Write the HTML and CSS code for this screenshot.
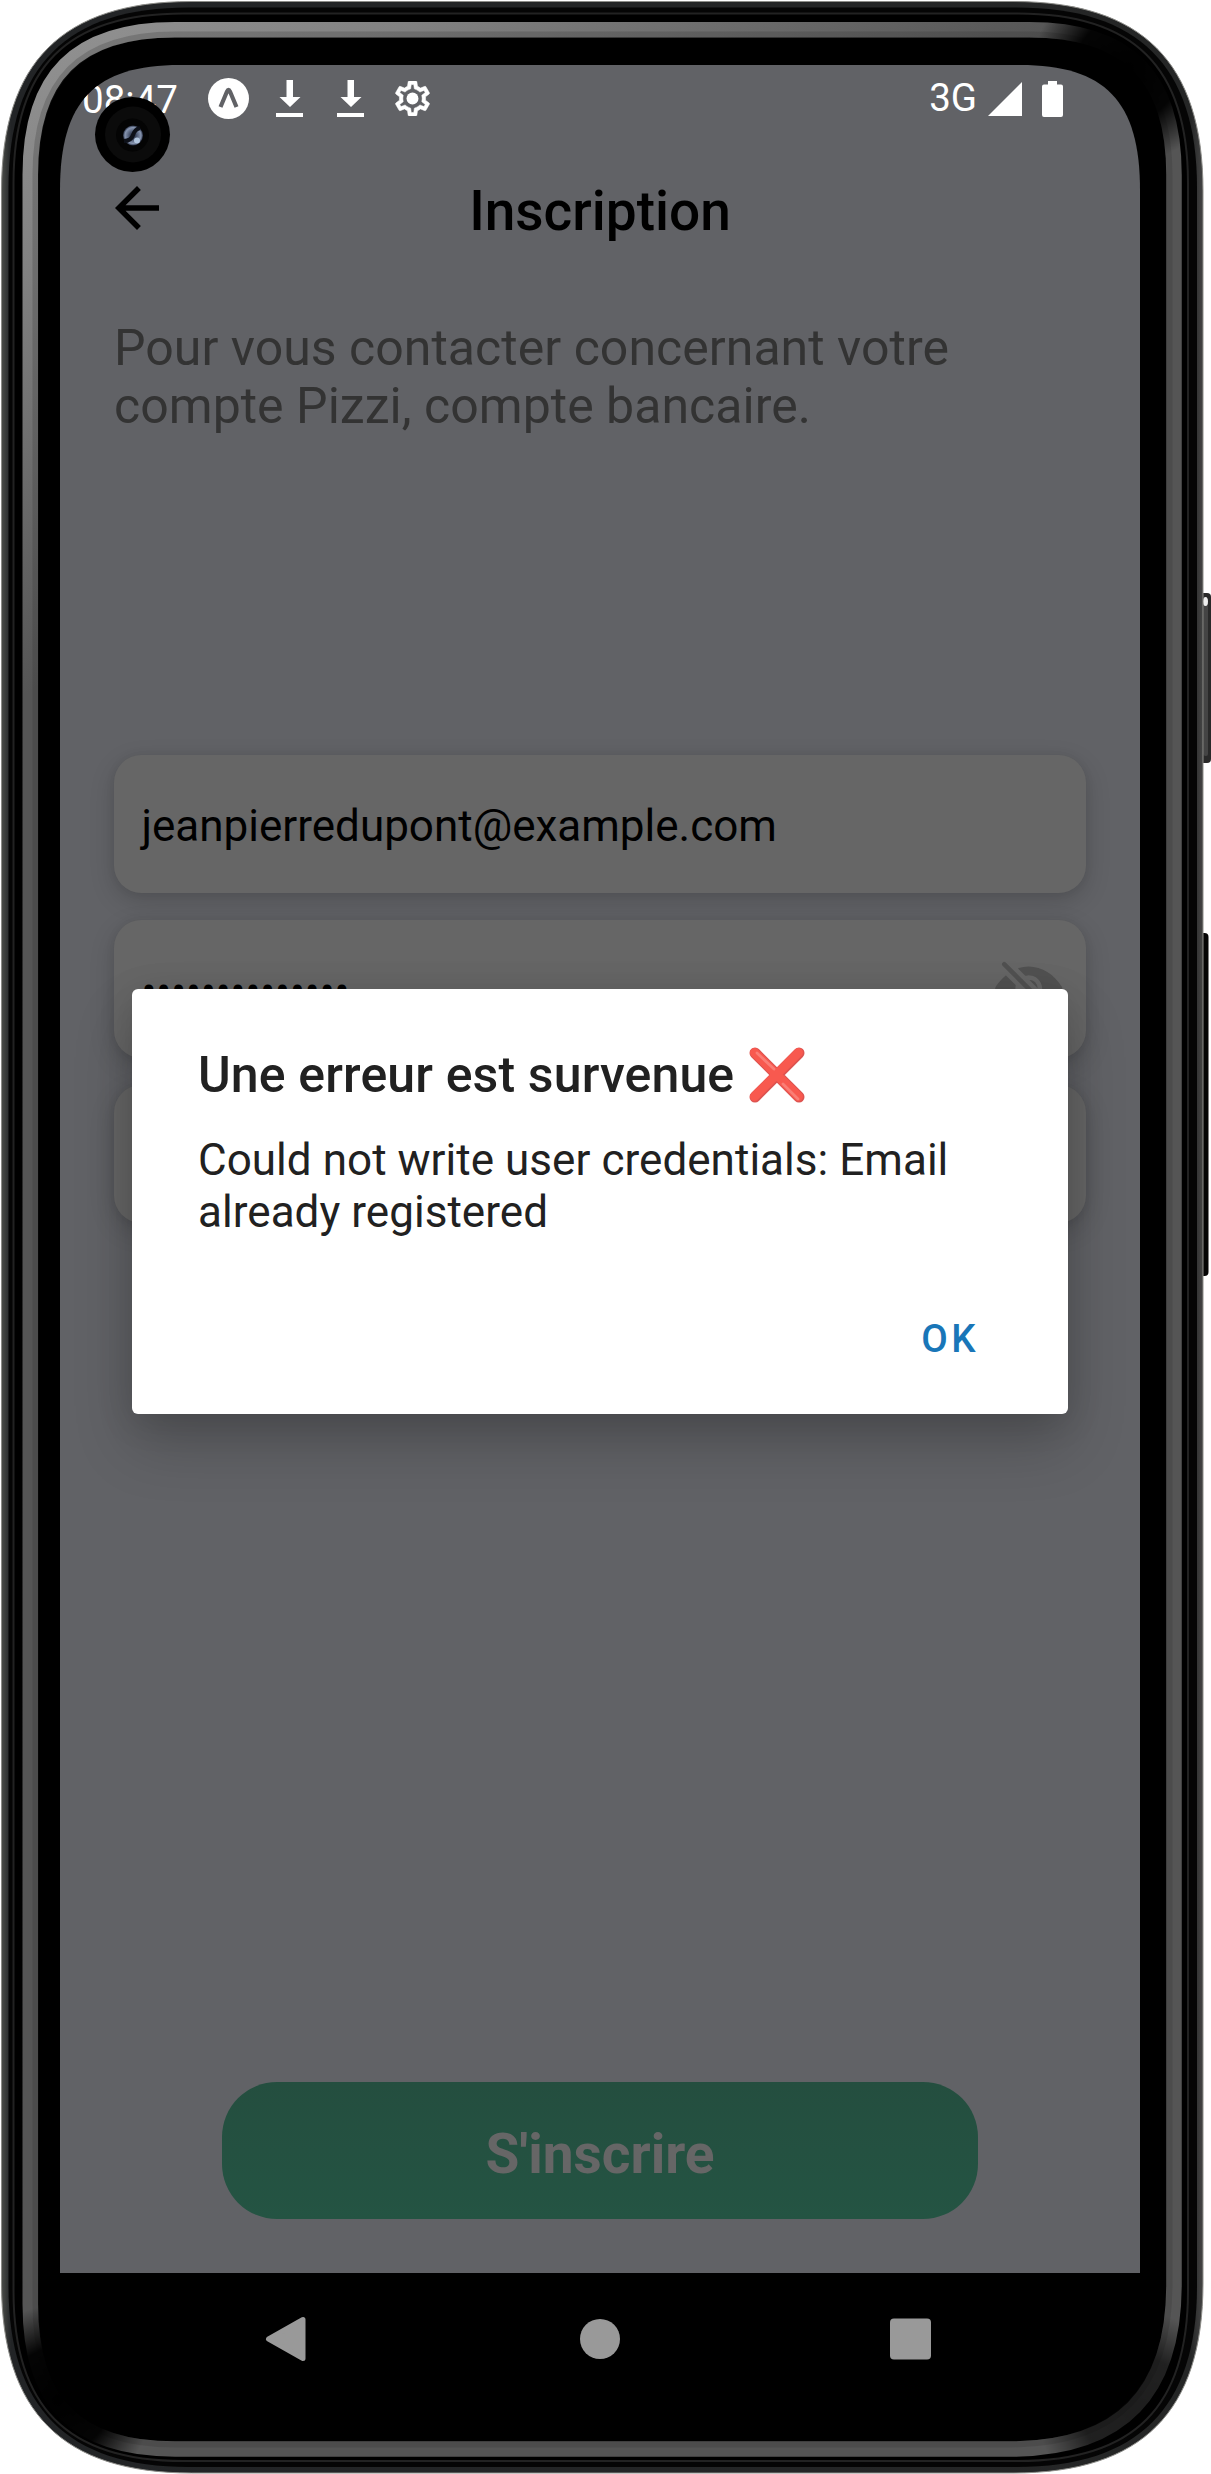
FILE: index.html
```html
<!DOCTYPE html>
<html lang="fr">
<head>
<meta charset="utf-8">
<title>Inscription</title>
<link rel="stylesheet" href="styles.css">
</head>
<body>
<div class="phone">
  <svg class="frame" viewBox="0 0 1211 2474" aria-hidden="true">
    <defs>
      <linearGradient id="shine" gradientUnits="userSpaceOnUse" x1="30" y1="30" x2="330" y2="500">
        <stop offset="0" stop-color="#929292"/><stop offset=".35" stop-color="#828282"/><stop offset="1" stop-color="#555"/>
      </linearGradient>
      <linearGradient id="edge" x1="0" y1="0" x2="1" y2="0">
        <stop offset="0" stop-color="#4b4d49"/><stop offset=".008" stop-color="#222426"/><stop offset=".99" stop-color="#252626"/><stop offset="1" stop-color="#454545"/>
      </linearGradient>
      <radialGradient id="fade">
        <stop offset="0" stop-color="#000"/><stop offset=".55" stop-color="#000" stop-opacity=".95"/><stop offset="1" stop-color="#000" stop-opacity="0"/>
      </radialGradient>
      <mask id="corners" maskUnits="userSpaceOnUse" x="0" y="0" width="1211" height="2474">
        <rect width="1211" height="2474" fill="#fff"/>
        <circle cx="1128" cy="68" r="95" fill="url(#fade)"/>
        <circle cx="58" cy="2400" r="95" fill="url(#fade)"/>
        <circle cx="1138" cy="2412" r="100" fill="url(#fade)" opacity=".65"/>
      </mask>
    </defs>
    <rect x="1196" y="593" width="15" height="170" rx="4" fill="#292929"/>
    <rect x="1203.500" y="604" width="4.500" height="152" rx="2" fill="#444"/>
    <ellipse cx="1205.500" cy="601.500" rx="2.500" ry="4.500" fill="#eee"/>
    <rect x="1196" y="933" width="12.500" height="343" rx="4" fill="#050505"/>
    <path d="M191.500 1.500H1013C1142 1.500 1203 62 1203 191V2283C1203 2412 1142 2473 1013 2473H191.500C62.500 2473 1.500 2412 1.500 2283V191C1.500 62 62.500 1.500 191.500 1.500Z" fill="url(#edge)" stroke="#8d8d89" stroke-width="1"/>
    <path d="M189 7.500H1016C1138 7.500 1197 65 1197 188V2286C1197 2408 1138 2467 1016 2467H189C67 2467 8.500 2408 8.500 2286V188C8.500 65 67 7.500 189 7.500Z" fill="#050505"/>
    <path d="M183 13.500H1018C1134 13.500 1188 67 1188 183V2291C1188 2407 1134 2461 1018 2461H183C67 2461 13.500 2407 13.500 2291V183C13.500 67 67 13.500 183 13.500Z" fill="#000" stroke="#222" stroke-width="2"/>
    <g fill="none" mask="url(#corners)">
      <path d="M175 29.750H1029C1128 29.750 1174 76 1174 175V2284C1174 2395 1120 2449 1009 2449H175C76 2449 30.250 2403 30.250 2304V175C30.250 76 76 29.750 175 29.750Z" stroke="url(#shine)" stroke-width="15.500"/>
      <path d="M175 34.500H1029C1124 34.500 1169.500 80 1169.500 175V2284C1169.500 2391 1116 2444.500 1009 2444.500H175C80 2444.500 35.500 2399 35.500 2304V175C35.500 80 80 34.500 175 34.500Z" stroke="#333" stroke-opacity=".25" stroke-width="6"/>
    </g>
  </svg>

  <div class="screen">
    <div class="app">
      <div class="status">
        <span class="time">08:47</span>
        <svg class="s-expo" viewBox="0 0 41 41"><circle cx="20.500" cy="20.500" r="20.500" fill="#fff"/><path d="M12.500 29L19 13.500Q20.500 10 22 13.500L28.500 29" fill="none" stroke="#616266" stroke-width="4.200"/></svg>
        <svg class="s-down" viewBox="0 0 27 37"><path d="M10.500 0H17V17H24.500L14 27L3.500 17H10.500ZM0 33H27V37H0Z" fill="#fff"/></svg>
        <svg class="s-down" viewBox="0 0 27 37"><path d="M10.500 0H17V17H24.500L14 27L3.500 17H10.500ZM0 33H27V37H0Z" fill="#fff"/></svg>
        <svg class="s-gear" viewBox="2 2 20 20"><path fill="#fff" stroke="#fff" stroke-width=".3" d="M19.430 12.980c.04-.32.07-.64.07-.98 0-.34-.03-.66-.07-.98l2.110-1.650c.19-.15.24-.42.12-.64l-2-3.460c-.09-.16-.26-.25-.44-.25-.06 0-.12.01-.17.03l-2.490 1c-.52-.4-1.080-.73-1.690-.98l-.38-2.650C14.460 2.180 14.250 2 14 2h-4c-.25 0-.46.18-.49.42l-.38 2.650c-.61.25-1.170.59-1.690.98l-2.490-1c-.06-.02-.12-.03-.18-.03-.17 0-.34.09-.43.25l-2 3.460c-.13.22-.07.49.12.64l2.110 1.650c-.04.32-.07.65-.07.98 0 .33.03.66.07.98l-2.110 1.650c-.19.15-.24.42-.12.64l2 3.460c.09.16.26.25.44.25.06 0 .12-.01.17-.03l2.490-1c.52.4 1.080.73 1.690.98l.38 2.650c.03.24.24.42.49.42h4c.25 0 .46-.18.49-.42l.38-2.650c.61-.25 1.170-.59 1.690-.98l2.490 1c.06.02.12.03.18.03.17 0 .34-.09.43-.25l2-3.460c.12-.22.07-.49-.12-.64l-2.110-1.650zm-1.980-1.710c.04.31.05.52.05.73 0 .21-.02.43-.05.73l-.14 1.130.89.7 1.080.84-.7 1.210-1.270-.51-1.040-.42-.9.68c-.43.32-.84.56-1.250.73l-1.060.43-.16 1.130-.2 1.350h-1.400l-.19-1.350-.16-1.130-1.060-.43c-.43-.18-.83-.41-1.230-.71l-.91-.7-1.060.43-1.270.51-.7-1.210 1.080-.84.89-.7-.14-1.130c-.03-.31-.05-.54-.05-.74s.02-.43.05-.73l.14-1.130-.89-.7-1.080-.84.7-1.210 1.270.51 1.040.42.9-.68c.43-.32.84-.56 1.250-.73l1.060-.43.16-1.130.2-1.350h1.390l.19 1.350.16 1.130 1.060.43c.43.18.83.41 1.230.71l.91.7 1.060-.43 1.270-.51.7 1.210-1.070.85-.89.7.14 1.130z"/><circle cx="12" cy="12" r="3.400" fill="#fff"/></svg>
        <span class="net">3G</span>
        <svg class="s-signal" viewBox="0 0 34 34"><path d="M34 0V34H0Z" fill="#fff"/></svg>
        <svg class="s-battery" viewBox="0 0 21 36"><path d="M6 0H15V3.500H19Q21 3.500 21 5.500V34Q21 36 19 36H2Q0 36 0 34V5.500Q0 3.500 2 3.500H6Z" fill="#fff"/></svg>
      </div>
      <header class="header">
        <svg class="back" viewBox="0 0 24 24"><path d="M20 11H7.830l5.590-5.590L12 4l-8 8 8 8 1.410-1.410L7.830 13H20v-2z"/></svg>
        <h1>Inscription</h1>
      </header>
      <p class="intro">Pour vous contacter concernant votre<br>compte Pizzi, compte bancaire.</p>
      <form class="fields">
        <div class="field">jeanpierredupont@example.com</div>
        <div class="field"><span>••••••••••••••</span>
          <svg class="eye" viewBox="0 0 512 512"><path d="M432 448a15.920 15.920 0 01-11.310-4.690l-352-352a16 16 0 0122.620-22.620l352 352A16 16 0 01432 448zM248 315.850l-51.790-51.790a2 2 0 00-3.390 1.690 64.110 64.110 0 0053.490 53.490 2 2 0 001.690-3.390zM264 196.150L315.870 248a2 2 0 003.400-1.690 64.130 64.130 0 00-53.550-53.550 2 2 0 00-1.720 3.390z"/><path d="M491 273.360a32.200 32.200 0 00-.1-34.760c-26.460-40.920-60.790-75.680-99.270-100.530C349 110.550 302 96 255.680 96a226.540 226.540 0 00-71.820 11.790 4 4 0 00-1.560 6.630l47.240 47.240a4 4 0 003.820 1.050 96 96 0 01116 116 4 4 0 001.050 3.810l67.950 68a4 4 0 005.400.24 343.810 343.810 0 0067.240-77.400zM256 352a96 96 0 01-93.300-118.630 4 4 0 00-1.050-3.810l-66.840-66.870a4 4 0 00-5.410-.23c-24.390 20.810-47 46.130-67.670 75.720a31.920 31.920 0 00-.64 35.540c26.410 41.330 60.390 76.140 98.280 100.650C162.060 402 207.920 416 255.680 416a238.220 238.220 0 0072.640-11.550 4 4 0 001.610-6.640l-47.470-47.460a4 4 0 00-3.810-1.050A96 96 0 01256 352z"/></svg>
        </div>
        <div class="field"></div>
      </form>
      <div class="submit">S'inscrire</div>
    </div>
    <nav class="nav">
      <svg viewBox="0 0 44 46"><path d="M39 3.500V42.500L4.500 23Z" fill="#999" stroke="#999" stroke-width="5" stroke-linejoin="round"/></svg>
      <svg viewBox="0 0 44 46"><circle cx="23" cy="23" r="20" fill="#999"/></svg>
      <svg viewBox="0 0 44 46"><rect x="0" y="2.500" width="41" height="41" rx="4" fill="#999"/></svg>
    </nav>
  </div>

  <div class="dialog">
    <div class="dialog-title"><span>Une erreur est survenue</span>
      <svg class="cross" viewBox="0 0 56 56"><g stroke-linecap="round" fill="none"><path d="M6 6L50 50M50 6L6 50" stroke="#dd5350" stroke-width="11"/><path d="M5.500 5.500L49.500 49.500M49.500 5.500L5.500 49.500" stroke="#f8594f" stroke-width="9"/><path d="M8 7L25 23M34 38L49 53" transform="translate(0 -1)" stroke="#fa7e76" stroke-width="2.800"/></g></svg>
    </div>
    <p>Could not write user credentials: Email already registered</p>
    <div class="ok">OK</div>
  </div>

  <svg class="overlay" viewBox="0 0 1211 300" aria-hidden="true">
    <defs><radialGradient id="lens"><stop offset="0" stop-color="#1b2232"/><stop offset=".3" stop-color="#3f4a62"/><stop offset=".8" stop-color="#8795b0"/><stop offset="1" stop-color="#283044"/></radialGradient></defs>
    <circle cx="132.500" cy="134.500" r="37.500"/>
    <circle cx="133" cy="134.500" r="28" fill="#0b0b0b"/>
    <circle cx="132.500" cy="135" r="16.500" fill="#040404"/>
    <circle cx="133" cy="135.500" r="10" fill="url(#lens)"/>
    <path d="M124 141Q131 141 133 135T140 128" fill="none" stroke="#0d1018" stroke-width="4"/>
    <circle cx="137" cy="140.500" r="3" fill="#b0c4dc"/>
  </svg>
</div>
</body>
</html>
```
FILE: styles.css
```css
* { box-sizing: border-box; }
body { margin: 0; background: #fff; font-family: Roboto, sans-serif; }
svg { display: block; flex: none; }
.phone { position: relative; width: 1211px; height: 2474px; padding: 65px 0 0 60px; overflow: hidden; }
.frame { position: absolute; left: 0; top: 0; width: 1211px; height: 2474px; }
.overlay { position: absolute; left: 0; top: 0; width: 1211px; height: 300px; }
.screen { position: relative; width: 1080px; height: 2340px; display: flex; flex-direction: column; }
.app { height: 2208px; background: #616266; display: flex; flex-direction: column; align-items: center; clip-path: path("M0 125C0 36 35 0 120 0H960C1045 0 1080 36 1080 125V2208H0Z"); }

.status { width: 1080px; height: 67px; padding: 0 77px 0 22px; display: flex; align-items: center; color: #fff; font-size: 38.5px; line-height: 45px; }
.time { width: 120px; padding-top: 2px; }
.s-expo { width: 41px; height: 41px; margin: 0 27px 0 6px; }
.s-down { width: 27px; height: 37px; margin-right: 34px; }
.s-gear { width: 35px; height: 35px; margin-left: -3px; }
.net { margin-left: auto; margin-top: -2px; }
.s-signal { width: 34px; height: 34px; margin: 0 20px 0 11px; }
.s-battery { width: 21px; height: 36px; }

.header { position: relative; width: 1080px; height: 154px; padding: 43px 44px 0; display: flex; }
.back { width: 66px; height: 66px; }
.header h1 { flex: 1; margin: 3px 66px 0 0; text-align: center; font-weight: 500; font-size: 55px; line-height: 66px; }
.intro { width: 972px; margin: 33px 0 0; height: 116px; color: #333; font-size: 50px; line-height: 58px; letter-spacing: .03px; }
.fields { width: 972px; margin-top: 320px; display: flex; flex-direction: column; gap: 27.5px; }
.field { height: 137.5px; padding: 5px 22px 0 27.5px; display: flex; align-items: center; justify-content: space-between; border-radius: 27.5px; background: #666; color: #000; font-size: 44px; box-shadow: 0 8px 24px rgba(0, 0, 0, .17), 0 0 10px rgba(0, 0, 0, .06); }
.eye { width: 71.5px; height: 71.5px; margin-top: -5px; fill: #515151; }
.submit { width: 756px; height: 137px; margin: auto 0 54px; padding-top: 4px; border-radius: 55px; background: linear-gradient(#244e3f, #245443); color: #666; font-weight: 700; font-size: 55px; line-height: 137px; text-align: center; }

.nav { height: 132px; padding: 0 206px 0 204px; display: flex; align-items: center; justify-content: space-between; }
.nav svg { width: 44px; height: 46px; }

.dialog { position: absolute; left: 132px; top: 989px; width: 936px; height: 425px; padding: 0 66px; border-radius: 6px; background: #fff; color: #212121; box-shadow: 0 30px 60px rgba(0, 0, 0, .2), 0 6px 36px rgba(0, 0, 0, .12); }
.dialog-title { display: flex; align-items: center; gap: 15px; height: 58px; margin-top: 57px; font-weight: 500; font-size: 50px; line-height: 58px; letter-spacing: .14px; }
.cross { width: 56px; height: 56px; }
.dialog p { margin: 30px 0 0; font-size: 44px; line-height: 52px; letter-spacing: .04px; }
.ok { margin: 78px 23px 0 0; text-align: right; color: #1976b8; font-weight: 500; font-size: 38.5px; line-height: 46px; letter-spacing: 3.4px; }
```
